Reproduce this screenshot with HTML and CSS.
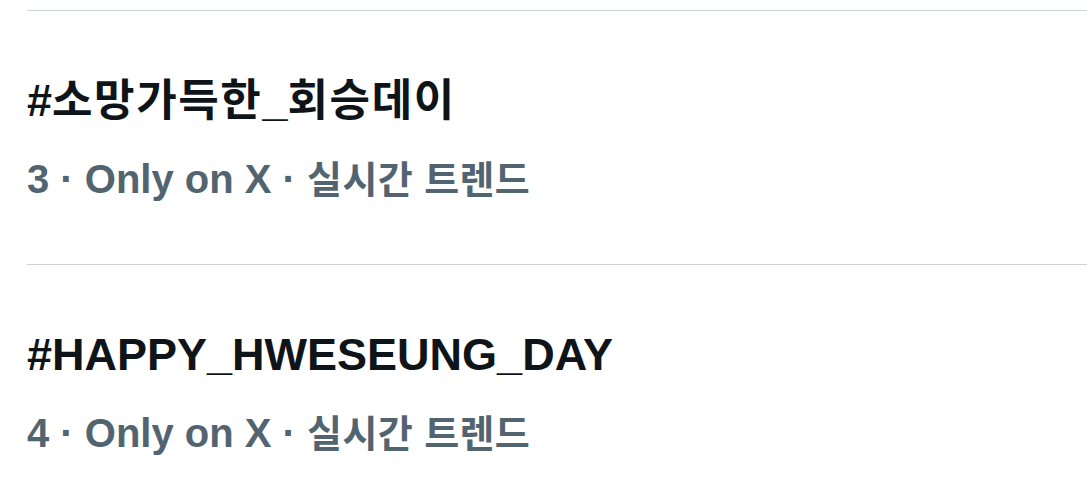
FILE: index.html
```html
<!DOCTYPE html>
<html lang="ko">
<head>
<meta charset="utf-8">
<link rel="stylesheet" href="styles.css">
</head>
<body>
<div class="list">
  <div class="trend">
    <div class="title">#<span class="ko">소망가득한</span>_<span class="ko">회승데이</span></div>
    <div class="meta">3 · Only on X · <span class="ko">실시간 트렌드</span></div>
  </div>
  <div class="trend">
    <div class="title">#HAPPY_HWESEUNG_DAY</div>
    <div class="meta">4 · Only on X · <span class="ko">실시간 트렌드</span></div>
  </div>
</div>
</body>
</html>
```
FILE: styles.css
```css
html, body {
  margin: 0;
  padding: 0;
  background: #ffffff;
}
body {
  font-family: "Liberation Sans", "Noto Sans CJK KR", sans-serif;
  overflow: hidden;
}
.list {
  padding-top: 10px;
  padding-left: 27px;
}
.trend {
  border-top: 1px solid #cfd4d8;
  padding: 50px 0 46px 0;
}
.title {
  font-size: 45px;
  line-height: 80px;
  font-weight: 700;
  color: #0f1419;
  white-space: nowrap;
}
.title .ko {
  font-family: "Noto Sans CJK KR", sans-serif;
  font-size: 44px;
  letter-spacing: 1.6px;
  line-height: 1;
}
.meta {
  font-size: 40px;
  line-height: 77px;
  font-weight: 700;
  color: #536471;
  white-space: nowrap;
}
.meta .ko {
  font-family: "Noto Sans CJK KR", sans-serif;
  font-size: 38px;
  letter-spacing: 0.4px;
  line-height: 1;
}
```
